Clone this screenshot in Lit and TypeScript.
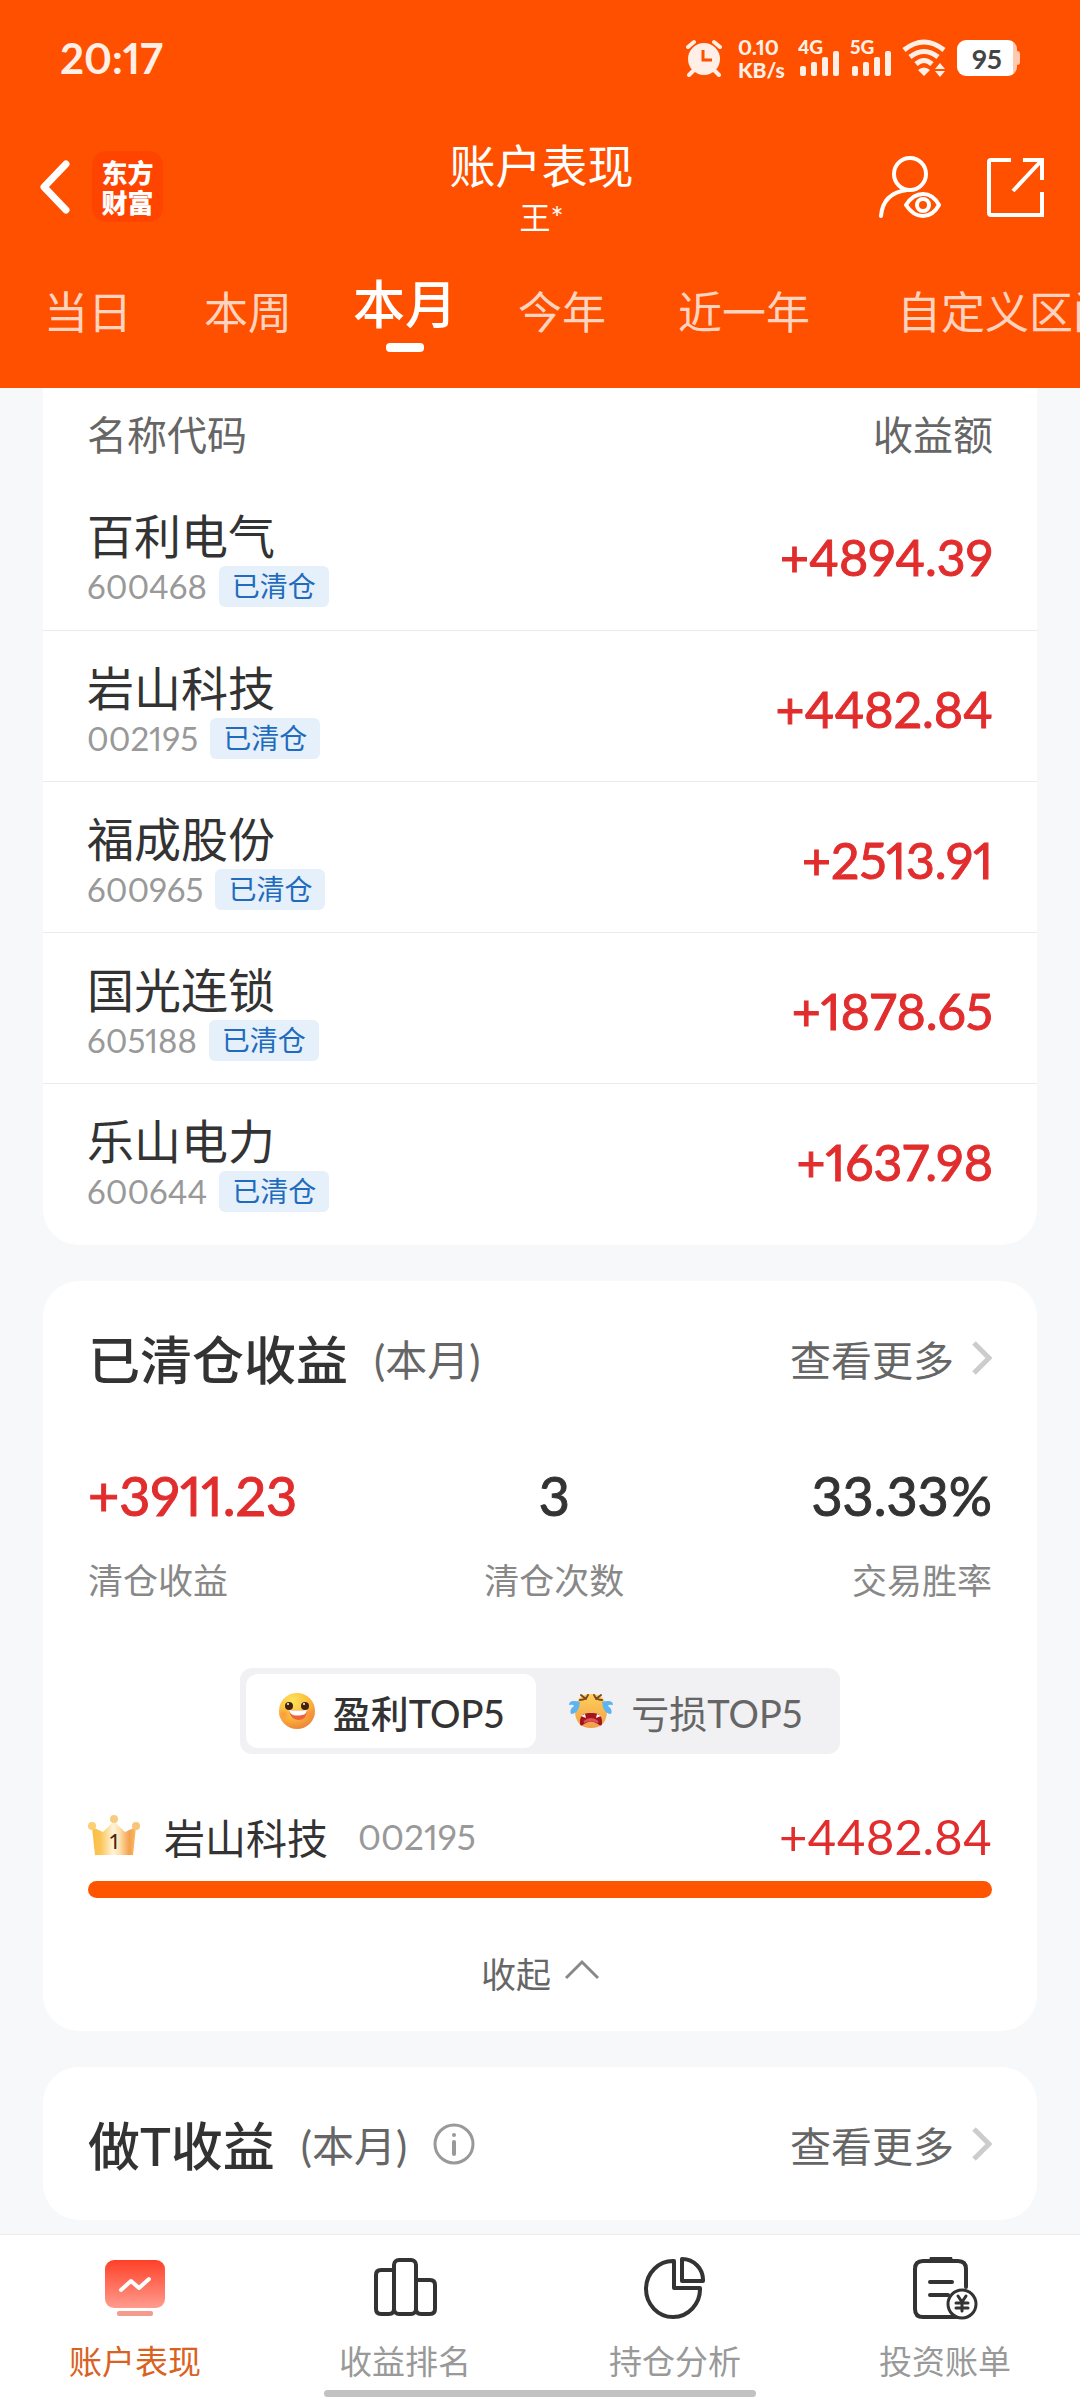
import { LitElement, html, css, svg } from "lit";
import { customElement, state } from "lit/decorators.js";
import { classMap } from "lit/directives/class-map.js";

const holdings = [
  { name: "百利电气", code: "600468", profit: "+4894.39" },
  { name: "岩山科技", code: "002195", profit: "+4482.84" },
  { name: "福成股份", code: "600965", profit: "+2513.91" },
  { name: "国光连锁", code: "605188", profit: "+1878.65" },
  { name: "乐山电力", code: "600644", profit: "+1637.98" },
];

const ranges = ["当日", "本周", "本月", "今年", "近一年", "自定义区间"];

const signal = (label: string) => html`<svg width="52" height="60" viewBox="0 -10 52 60" role="img" aria-label="${label} 信号">
  <g fill="#ffefe6">
    <rect x="2" y="28" width="6" height="10" rx="2"/>
    <rect x="13" y="24" width="6" height="14" rx="2"/>
    <rect x="24" y="19" width="6" height="19" rx="2"/>
    <rect x="35" y="13" width="6" height="25" rx="2"/>
  </g>
  <text x="0" y="16" font-family="Lato, sans-serif" font-weight="900" font-size="19" fill="#ffefe6">${label}</text>
</svg>`;

const chevron = html`<svg class="chevron" width="20" height="34" viewBox="0 0 20 34" aria-hidden="true">
  <path d="M2 2 L17 17 L2 32" fill="none" stroke="#ccc" stroke-width="5"/></svg>`;

const happyFace = html`<svg width="38" height="38" viewBox="0 0 38 38" aria-hidden="true">
  <defs>
    <radialGradient id="happy" cx="38%" cy="22%" r="80%">
      <stop offset="0" stop-color="#ffe35c"/><stop offset=".55" stop-color="#fdbc3c"/><stop offset="1" stop-color="#ec8438"/>
    </radialGradient>
    <radialGradient id="blush"><stop offset="0" stop-color="#f98a3c" stop-opacity=".7"/><stop offset="1" stop-color="#f98a3c" stop-opacity="0"/></radialGradient>
  </defs>
  <circle cx="19" cy="19" r="18" fill="url(#happy)"/>
  <circle cx="6" cy="22" r="6" fill="url(#blush)"/><circle cx="32" cy="22" r="6" fill="url(#blush)"/>
  <circle cx="11" cy="14" r="4" fill="#43210f"/><circle cx="27" cy="14" r="4" fill="#43210f"/>
  <circle cx="10" cy="12" r="1" fill="#fff"/><circle cx="26" cy="12" r="1" fill="#fff"/>
  <path d="M11 18 Q19 19 29 18 Q29 28 20 28 Q12 27 11 18Z" fill="#f0603c"/>
  <path d="M11 18 Q19 19 29 18 Q28 23 24 23 Q19 24 15 23 Q12 22 11 18Z" fill="#fff"/>
</svg>`;

const cryingFace = html`<svg width="46" height="38" viewBox="0 0 46 38" aria-hidden="true">
  <defs>
    <linearGradient id="cry" x1="0" y1="0" x2="0" y2="1">
      <stop offset="0" stop-color="#ffcf5a"/><stop offset="1" stop-color="#f0a04a"/>
    </linearGradient>
  </defs>
  <path d="M23 2 C34 2 39 9 39 19 C39 30 33 36 23 36 C13 36 7 30 7 19 C7 9 12 2 23 2Z" fill="url(#cry)"/>
  <path d="M12 8 Q18 8 20 3 M34 8 Q28 8 26 3 M13 3 L18 7 M33 3 L28 7" fill="none" stroke="#7a4722" stroke-width="2" stroke-linecap="round"/>
  <path d="M12 32 Q11 20 23 21 Q35 20 34 32 Q33 35 30 32 Q23 27 16 32 Q13 35 12 32Z" fill="#a3141c"/>
  <path d="M13 24 L17 22 L18 26Z M33 24 L29 22 L28 26Z" fill="#fff"/>
  <path d="M16 30 Q23 24 30 30 Q23 27 16 30Z" fill="#e2505c" stroke="#e2505c" stroke-width="2"/>
  <path d="M12 10 Q1 7 1 13 Q6 12 6 14 Q1 17 3 22 Q9 22 11 15Z M34 10 Q45 7 45 13 Q40 12 40 14 Q45 17 43 22 Q37 22 35 15Z" fill="#5db4f2"/>
</svg>`;

const crown = html`<svg width="52" height="42" viewBox="0 0 52 42" role="img" aria-label="第1名">
  <defs>
    <linearGradient id="gold" x1="0" y1="0" x2="1" y2="0">
      <stop offset="0" stop-color="#fbbd3c"/><stop offset=".2" stop-color="#fbc65a"/><stop offset=".48" stop-color="#fff3d8"/>
      <stop offset=".62" stop-color="#fde2b0"/><stop offset=".85" stop-color="#f5a04e"/><stop offset="1" stop-color="#f9bd62"/>
    </linearGradient>
  </defs>
  <path d="M4 12 L15 17 L26 6 L37 17 L48 12 L45 40 H7Z" fill="url(#gold)"/>
  <circle cx="26" cy="4" r="4" fill="#f8cb80"/><circle cx="4" cy="11" r="4" fill="#fbd070"/><circle cx="48" cy="11" r="4" fill="#f8c478"/>
  <text x="26" y="34" text-anchor="middle" font-family="Lato, sans-serif" font-size="22" fill="#4a2610">1</text>
</svg>`;

const tabIcons = [
  html`<svg width="64" height="64" viewBox="0 0 64 64" aria-hidden="true">
    <defs><linearGradient id="red" x1="0" y1="0" x2="0" y2="1"><stop offset="0" stop-color="#ff4027"/><stop offset="1" stop-color="#ff9c8e"/></linearGradient></defs>
    <rect x="2" y="3" width="60" height="48" rx="9" fill="url(#red)"/>
    <path d="M18 33 L28 24 L36 31 L46 22" fill="none" stroke="#fff" stroke-width="4" stroke-linecap="round" stroke-linejoin="round"/>
    <rect x="14" y="54" width="36" height="5" rx="2" fill="#f39c8e"/></svg>`,
  html`<svg width="64" height="64" viewBox="0 0 64 64" aria-hidden="true" fill="none" stroke="#333" stroke-width="4">
    <path d="M21 13 H8 Q3 13 3 18 V52 Q3 57 8 57 H16 Q21 57 21 52"/>
    <rect x="21" y="3" width="22" height="54" rx="5"/>
    <path d="M43 23 H57 Q62 23 62 28 V52 Q62 57 57 57 H48 Q43 57 43 52"/></svg>`,
  html`<svg width="64" height="64" viewBox="0 0 64 64" aria-hidden="true" fill="none" stroke="#333" stroke-width="4" stroke-linejoin="round">
    <path d="M31 4 A27 28 0 1 0 57 31 H31Z"/><path d="M39 2 A21 21 0 0 1 60 24 H39Z"/></svg>`,
  html`<svg width="66" height="64" viewBox="0 0 66 64" aria-hidden="true" fill="none" stroke="#333" stroke-width="4" stroke-linecap="round">
    <path d="M54 30 V12 Q54 4 46 4 H11 Q3 4 3 12 V52 Q3 60 11 60 H48"/>
    <path d="M20 2 H38" stroke-width="5"/><path d="M18 25 H40 M18 38 H36"/>
    <circle cx="50" cy="47" r="14" fill="#fff" stroke-width="3"/>
    <path d="M46 39 L50 45 L54 39 M50 45 V54 M44 46 H56 M44 51 H56" stroke-width="3"/></svg>`,
];
const tabNames = ["账户表现", "收益排名", "持仓分析", "投资账单"];

@customElement("app-root")
export class AppRoot extends LitElement {
  @state() private range = 2;
  @state() private board = 0;
  @state() private tab = 0;

  static styles = css`
    :host {
      display: flex;
      flex-direction: column;
      min-height: 100vh;
      background: #f7f8fa;
      color: #333;
      font-family: Lato, "Noto Sans CJK SC", sans-serif;
      font-variant-numeric: proportional-nums;
    }
    * { box-sizing: border-box; }
    svg { display: block; flex: none; }
    button, a { font: inherit; font-variant-numeric: inherit; color: inherit; text-decoration: none; background: none; border: 0; padding: 0; margin: 0; }
    h1, h2, p { margin: 0; padding: 0; }

    .header { background: #ff5000; color: #fff; height: 388px; overflow: hidden; }
    .status { display: flex; justify-content: space-between; align-items: center; height: 116px; padding: 0 60px; color: #ffefe6; }
    .clock { font-size: 42px; font-weight: 700; }
    .indicators { display: flex; align-items: center; }
    .speed { width: 44px; font-size: 21px; line-height: 23px; font-weight: 900; margin: 0 16px 0 15px; white-space: nowrap; }
    .battery { display: flex; align-items: center; margin-left: 9px; }
    .level { display: flex; align-items: center; justify-content: center; width: 60px; height: 36px; border-radius: 9px; background: linear-gradient(90deg, #fff 56px, #ffc9b0 56px); color: #444; font-size: 27px; font-weight: 700; }
    .cap { width: 3px; height: 14px; border-radius: 0 3px 3px 0; background: #ffc9b0; }

    .bar { display: grid; grid-template-columns: 1fr auto 1fr; align-items: center; height: 141px; padding: 0 35px 0 38px; }
    .lead, .actions { display: flex; align-items: center; }
    .lead { gap: 20px; }
    .actions { justify-content: flex-end; gap: 46px; }
    .brand { display: grid; place-items: center; width: 71px; height: 71px; border-radius: 14px; background: #ff4400; font: 900 26px/30px "Noto Sans CJK SC", sans-serif; }
    .heading { text-align: center; }
    .title { font-size: 46px; line-height: 60px; font-weight: 400; }
    .owner { font-size: 31px; line-height: 42px; }

    .ranges { display: flex; align-items: flex-start; padding: 23px 0 0 8px; white-space: nowrap; }
    .range { flex: none; display: flex; flex-direction: column; align-items: center; padding: 8px 36px 0; font-size: 44px; line-height: 48px; color: #ffd3bf; }
    .range.wide { padding-left: 51px; }
    .range.on { padding: 0 25px; font-size: 52px; font-weight: 500; color: #fff; }
    .range.on::after { content: ""; width: 38px; height: 9px; margin-top: 15px; border-radius: 4px; background: #fff; }

    .content { flex: 1; padding: 0 43px 12px; }
    .card { background: #fff; border-radius: 36px; padding: 0 45px; margin-bottom: 36px; }
    .card.list { border-radius: 0 0 36px 36px; padding: 0 0 11px; }
    .card:last-child { margin-bottom: 0; }

    table { width: 100%; border-collapse: collapse; }
    th { height: 91px; padding: 0 44px 2px; font-size: 40px; font-weight: 400; color: #666; text-align: left; }
    td { height: 151px; padding: 6px 44px 0; border-bottom: 1px solid #ebebeb; }
    tr:last-child td { border-bottom: 0; }
    th.amount, td.amount { text-align: right; }
    td.amount { font-size: 50px; color: #e12d2d; }
    td.amount, .figure { -webkit-text-stroke: 1px currentColor; }
    .name { font-size: 47px; line-height: 59px; }
    .meta { display: flex; align-items: center; gap: 12px; }
    .code { font-size: 33px; line-height: 41px; color: #999; }
    .tag { padding: 0 13px; border-radius: 6px; background: #e5f0fb; color: #1f6bbd; font-size: 28px; line-height: 41px; }

    .top { display: flex; align-items: center; justify-content: space-between; height: 153px; }
    .subject { display: flex; align-items: center; gap: 26px; }
    h2 { font-size: 52px; font-weight: 500; }
    .period { font-size: 42px; color: #666; }
    .more { display: flex; align-items: center; gap: 18px; font-size: 41px; color: #666; }

    .stats { display: flex; justify-content: space-between; padding-top: 22px; }
    .stat { display: flex; flex-direction: column; text-align: center; }
    .stat:first-child { text-align: left; }
    .stat:last-child { text-align: right; }
    .figure { font-size: 54px; line-height: 80px; }
    .figure.up { color: #e12d2d; }
    .label { font-size: 35px; line-height: 88px; color: #888; }

    .boards { display: flex; width: fit-content; margin: 44px auto 0; padding: 6px; border-radius: 12px; background: #f1f1f3; }
    .board { display: flex; align-items: center; gap: 17px; height: 74px; padding: 0 32px; border-radius: 12px; font-size: 38px; color: #666; }
    .board.on { background: #fff; color: #333; font-weight: 500; }

    .leader { display: flex; align-items: center; height: 90px; margin-top: 37px; }
    .leader .who { margin-left: 24px; font-size: 41px; }
    .leader .id { margin-left: 30px; font-size: 35px; color: #999; }
    .leader .gain { margin-left: auto; font-size: 49px; color: #e12d2d; }
    .track { height: 17px; border-radius: 9px; }
    .fill { height: 100%; border-radius: 9px; background: #ff5500; }
    .fold { display: flex; align-items: center; justify-content: center; gap: 14px; width: 100%; height: 133px; padding-top: 16px; font-size: 35px; color: #666; }

    .tabs { display: flex; border-top: 1px solid #ebebeb; background: #fff; padding-top: 22px; }
    .tab { flex: 1; display: flex; flex-direction: column; align-items: center; gap: 15px; font-size: 33px; line-height: 50px; color: #999; }
    .tab.on { color: #d9621f; }
    .foot { background: #fff; }
    .grip { width: 40%; height: 7px; margin: 4px auto 3px; border-radius: 4px; background: #c2c2c2; }
  `;

  private renderStatus() {
    return html`<div class="status">
      <span class="clock">20:17</span>
      <div class="indicators">
        <svg width="38" height="38" viewBox="0 0 38 38" role="img" aria-label="闹钟">
          <circle cx="19" cy="20" r="16" fill="#ffefe6"/>
          <path d="M3 8 L9 3 M35 8 L29 3 M8 32 L4 36 M30 32 L34 36" stroke="#ffefe6" stroke-width="4" stroke-linecap="round"/>
          <path d="M18 11 V21 H27" fill="none" stroke="#ff5000" stroke-width="3"/>
        </svg>
        <div class="speed">0.10<br>KB/s</div>
        ${signal("4G")}${signal("5G")}
        <svg width="46" height="38" viewBox="0 0 46 38" role="img" aria-label="无线网络">
          <g fill="none" stroke="#ffefe6" stroke-width="5"><path d="M2 11 Q22 -5 42 11"/><path d="M8 18 Q22 7 36 18"/><path d="M14 25 Q22 18 30 25"/></g>
          <path d="M16 31 Q22 26 28 31 L22 37Z M38 24 L43 30 H33Z M33 32 H43 L38 38Z" fill="#ffefe6"/>
        </svg>
        <div class="battery"><span class="level">95</span><span class="cap"></span></div>
      </div>
    </div>`;
  }

  private renderBar() {
    return html`<div class="bar">
      <div class="lead">
        <button aria-label="返回"><svg width="34" height="56" viewBox="0 0 34 56"><path d="M28 5 L6 28 L28 51" fill="none" stroke="#fff" stroke-width="7" stroke-linecap="round" stroke-linejoin="round"/></svg></button>
        <div class="brand"><span>东方<br>财富</span></div>
      </div>
      <div class="heading"><h1 class="title">账户表现</h1><p class="owner">王*</p></div>
      <div class="actions">
        <button aria-label="账户查看"><svg width="62" height="64" viewBox="0 0 62 64" fill="none" stroke="#fff" stroke-width="4" stroke-linecap="round">
          <circle cx="31" cy="19" r="16"/><path d="M2 61 Q4 38 28 35"/>
          <path d="M27 50 Q34 39 44 39 Q54 39 60 50 Q54 61 44 61 Q34 61 27 50Z" stroke-linejoin="round"/><circle cx="44" cy="50" r="6"/></svg></button>
        <button aria-label="分享"><svg width="58" height="60" viewBox="0 0 58 60" fill="none" stroke="#fff" stroke-width="4">
          <path d="M24 3 H4 Q2 3 2 5 V56 Q2 58 4 58 H55 V35 M36 3 H55 V23 M55 3 L26 34"/></svg></button>
      </div>
    </div>`;
  }

  private renderTop(title: string, info = false) {
    return html`<div class="top">
      <div class="subject"><h2>${title}</h2><span class="period">(本月)</span>
        ${info ? html`<button aria-label="说明"><svg width="42" height="42" viewBox="0 0 42 42"><circle cx="21" cy="21" r="19" fill="none" stroke="#999" stroke-width="3"/><circle cx="21" cy="12" r="2" fill="#999"/><path d="M21 19 V31" stroke="#999" stroke-width="4" stroke-linecap="round"/></svg></button>` : ""}
      </div>
      <a class="more" href="#more">查看更多${chevron}</a>
    </div>`;
  }

  render() {
    return html`
      <header class="header">
        ${this.renderStatus()}${this.renderBar()}
        <nav class="ranges">
          ${ranges.map((r, i) => html`<button class=${classMap({ range: true, on: i === this.range, wide: r.length > 4 })} @click=${() => (this.range = i)}>${r}</button>`)}
        </nav>
      </header>
      <main class="content">
        <section class="card list">
          <table>
            <thead><tr><th scope="col">名称代码</th><th scope="col" class="amount">收益额</th></tr></thead>
            <tbody>
              ${holdings.map((h) => html`<tr>
                <td><div class="name">${h.name}</div><div class="meta"><span class="code">${h.code}</span><span class="tag">已清仓</span></div></td>
                <td class="amount">${h.profit}</td>
              </tr>`)}
            </tbody>
          </table>
        </section>
        <section class="card">
          ${this.renderTop("已清仓收益")}
          <div class="stats">
            <div class="stat"><span class="figure up">+3911.23</span><span class="label">清仓收益</span></div>
            <div class="stat"><span class="figure">3</span><span class="label">清仓次数</span></div>
            <div class="stat"><span class="figure">33.33%</span><span class="label">交易胜率</span></div>
          </div>
          <div class="boards">
            <button class=${classMap({ board: true, on: this.board === 0 })} @click=${() => (this.board = 0)}>${happyFace}盈利TOP5</button>
            <button class=${classMap({ board: true, on: this.board === 1 })} @click=${() => (this.board = 1)}>${cryingFace}亏损TOP5</button>
          </div>
          <div class="leader">${crown}<span class="who">岩山科技</span><span class="id">002195</span><span class="gain">+4482.84</span></div>
          <div class="track"><div class="fill" style="width:100%"></div></div>
          <button class="fold">收起<svg width="34" height="30" viewBox="0 0 34 30"><path d="M1 20 L17 4 L33 20" fill="none" stroke="#888" stroke-width="3"/></svg></button>
        </section>
        <section class="card">${this.renderTop("做T收益", true)}</section>
      </main>
      <footer class="foot">
        <nav class="tabs">
          ${tabNames.map((t, i) => html`<button class=${classMap({ tab: true, on: i === this.tab })} @click=${() => (this.tab = i)}>${tabIcons[i]}<span>${t}</span></button>`)}
        </nav>
        <div class="grip"></div>
      </footer>`;
  }
}
